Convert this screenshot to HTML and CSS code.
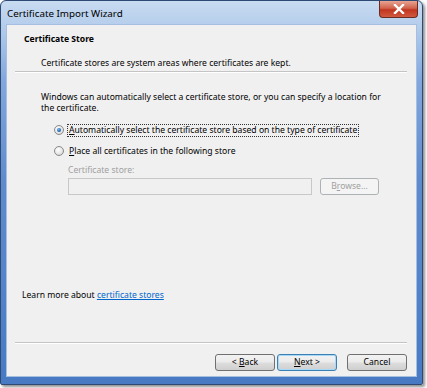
FILE: index.html
```html
<!DOCTYPE html>
<html>
<head>
<meta charset="utf-8">
<link rel="stylesheet" href="styles.css">
</head>
<body>
<div class="window">
  <div class="titlebar">
    <span class="title">Certificate Import Wizard</span>
    <div class="close">
      <svg width="12" height="10" viewBox="0 0 12 10"><path d="M2 1 L10 9 M10 1 L2 9" stroke="#fff" stroke-width="2.4" stroke-linecap="square"/></svg>
    </div>
  </div>
  <div class="client">
    <div class="header">
      <div class="h-title">Certificate Store</div>
      <div class="h-sub">Certificate stores are system areas where certificates are kept.</div>
    </div>
    <div class="sep"></div>
    <div class="body">
      <p class="intro">Windows can automatically select a certificate store, or you can specify a location for the certificate.</p>
      <div class="radio-row">
        <span class="radio checked"></span>
        <span class="radio-label focus"><u>A</u>utomatically select the certificate store based on the type of certificate</span>
      </div>
      <div class="radio-row second">
        <span class="radio"></span>
        <span class="radio-label"><u>P</u>lace all certificates in the following store</span>
      </div>
      <div class="store">
        <div class="store-label">Certificate store:</div>
        <div class="store-row">
          <div class="textbox"></div>
          <div class="btn disabled"><span>B<u>r</u>owse...</span></div>
        </div>
      </div>
    </div>
    <div class="learn">Learn more about <a href="#">certificate stores</a></div>
    <div class="spacer"></div>
    <div class="sep"></div>
    <div class="buttons">
      <div class="btn"><span>&lt; <u>B</u>ack</span></div>
      <div class="btn default"><span><u>N</u>ext &gt;</span></div>
      <div class="btn cancel"><span>Cancel</span></div>
    </div>
  </div>
</div>
</body>
</html>
```

FILE: styles.css
```css
html, body {
  margin: 0;
  padding: 0;
  background: #ffffff;
}
body {
  width: 427px;
  height: 388px;
  overflow: hidden;
  font-family: "Noto Sans", "Open Sans", sans-serif;
  font-size: 8.6px;
  color: #000;
}
.window {
  border: 1px solid #2e4a72;
  border-radius: 6px 6px 2px 2px;
  background: linear-gradient(180deg, #c8dbf1 0px, #b7cfec 22px, #82a7dd 80px, #5f8bcd 180px, #5182c8 300px, #477ac3 383px);
  box-shadow: 2px 2px 3px rgba(0,0,0,0.45);
  display: flex;
  flex-direction: column;
  padding: 0 5px 7px 5px;
  box-sizing: content-box;
  width: 411px;
  height: 376px;
}
.titlebar {
  height: 23px;
  display: flex;
  align-items: flex-start;
  justify-content: space-between;
}
.title {
  font-family: "Noto Sans", sans-serif;
  font-size: 9.8px;
  line-height: 12px;
  margin-top: 7px;
  margin-left: 1px;
  color: #000;
}
.close {
  width: 39px;
  height: 17px;
  margin-right: -1px;
  border: 1px solid #6b2a22;
  border-top: none;
  border-radius: 0 0 4px 4px;
  background: linear-gradient(180deg, #e8a493 0%, #d1634c 45%, #c2351f 55%, #d05a3f 100%);
  display: flex;
  align-items: center;
  justify-content: center;
  box-sizing: border-box;
}
.client {
  flex: 1;
  background: #f0f0f0;
  border: 1px solid #a6bfe0;
  display: flex;
  flex-direction: column;
  box-sizing: border-box;
}
.header {
  padding: 8px 0 0 17px;
  height: 38px;
}
.h-title {
  font-weight: bold;
  line-height: 12px;
}
.h-sub {
  line-height: 12px;
  margin: 12px 0 0 17px;
}
.sep {
  margin: 0 9px 0 8px;
  height: 0;
  border-top: 1px solid #c4c4c4;
  border-bottom: 1px solid #ffffff;
}
.body {
  padding: 19px 0 0 34px;
}
.intro {
  margin: 0;
  line-height: 11px;
  width: 345px;
}
.radio-row {
  display: flex;
  align-items: center;
  margin: 10px 0 0 13px;
  height: 12px;
}
.radio-row.second {
  margin-top: 9px;
}
.radio {
  width: 10px;
  height: 10px;
  border-radius: 50%;
  border: 1px solid #8a8a8a;
  background: radial-gradient(circle at 40% 35%, #ffffff 0%, #e6e6e6 55%, #c9c9c9 100%);
  box-sizing: border-box;
  position: relative;
  flex: none;
}
.radio.checked::after {
  content: "";
  position: absolute;
  left: 2px;
  top: 2px;
  width: 4px;
  height: 4px;
  border-radius: 50%;
  background: radial-gradient(circle at 40% 35%, #6fb8f5 0%, #1c5fae 65%, #123f7a 100%);
}
.radio-label {
  margin-left: 3px;
  line-height: 11px;
  padding: 0 1px;
  border: 1px solid transparent;
}
.radio-label.focus {
  border: 1px dotted #333;
}
.radio-label u {
  text-decoration: underline;
}
.store {
  margin-left: 27px;
  margin-top: 7px;
}
.store-label {
  color: #a0a0a0;
  line-height: 12px;
}
.store-row {
  display: flex;
  gap: 8px;
  margin-top: 2px;
}
.textbox {
  width: 244px;
  height: 17px;
  border: 1px solid #c8c8c8;
  background: #f0f0f0;
  box-sizing: border-box;
}
.btn {
  width: 60px;
  height: 17px;
  box-sizing: border-box;
  border: 1px solid #707070;
  border-radius: 3px;
  background: linear-gradient(180deg, #f2f2f2 0%, #ebebeb 48%, #dddddd 52%, #cfcfcf 100%);
  display: flex;
  align-items: center;
  justify-content: center;
  line-height: 11px;
  white-space: pre;
}
.btn.disabled {
  width: 59px;
  color: #a0a0a0;
  border-color: #adb2b5;
  background: #f4f4f4;
}
.btn u { text-decoration: underline; }
.learn {
  margin: 94px 0 0 15px;
  line-height: 12px;
}
.learn a {
  color: #0066cc;
  text-decoration: underline;
}
.spacer {
  flex: 1;
}
.buttons {
  display: flex;
  justify-content: flex-end;
  padding: 10px 9px 5px 0;
  gap: 2px;
}
.btn.default {
  border-color: #3c7fb1;
  box-shadow: inset 0 0 0 1px #a7d8f7;
}
.btn.cancel {
  margin-left: 8px;
}
```
